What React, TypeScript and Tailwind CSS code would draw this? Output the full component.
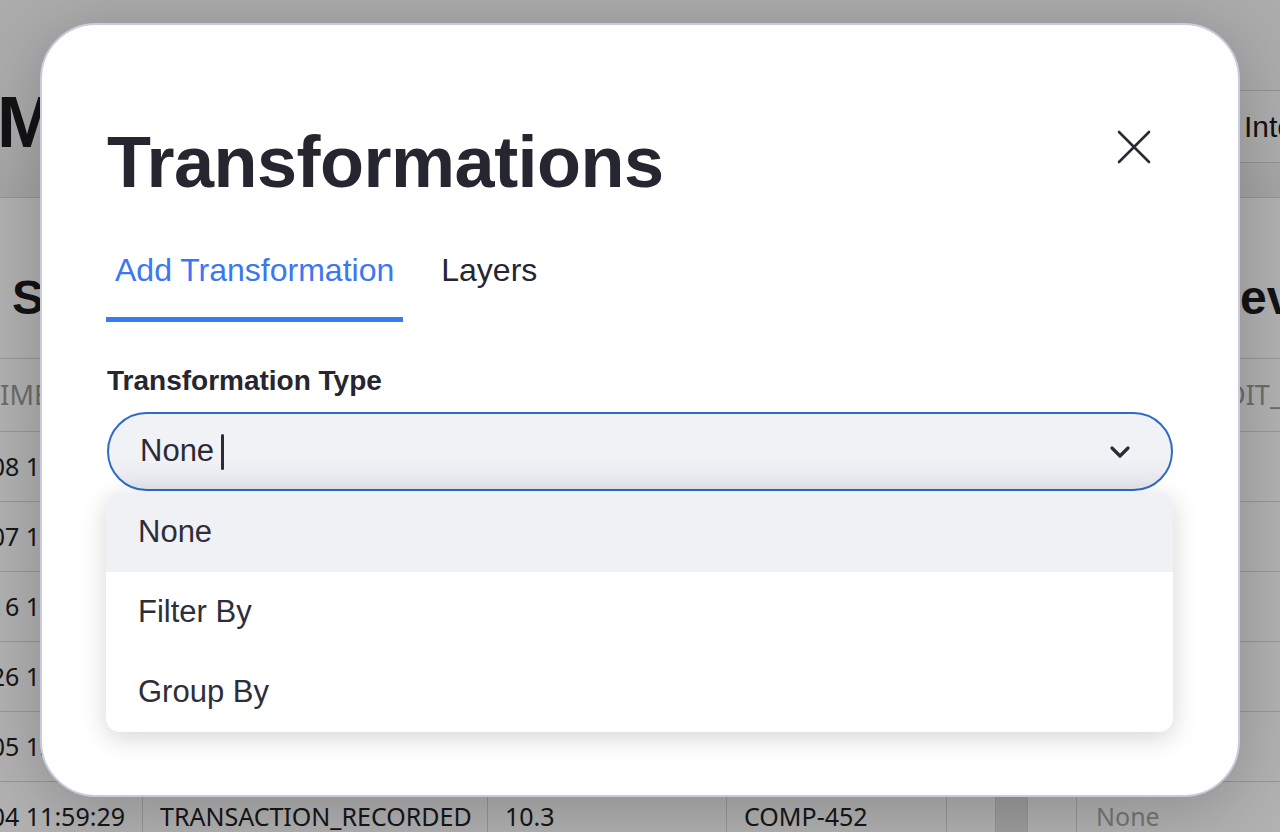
const leftRows = [
  ["2024-03-08 12:22:10", "ORDER_PLACED", "24.9", "COMP-118"],
  ["2024-03-07 10:05:44", "PAYMENT_SETTLED", "88.0", "COMP-207"],
  ["2024-03-16 11:10:11", "ORDER_SHIPPED", "12.5", "COMP-331"],
  ["2024-03-26 19:17:53", "REFUND_ISSUED", "3.75", "COMP-089"],
  ["2024-03-05 13:30:21", "ACCOUNT_UPDATED", "0.0", "COMP-140"],
  ["2024-03-04 11:59:29", "TRANSACTION_RECORDED", "10.3", "COMP-452"],
];

const options = ["None", "Filter By", "Group By"];

function Chevron() {
  return (
    <svg width="22" height="14" viewBox="0 0 22 14" fill="none">
      <polyline
        points="3,3 11,11 19,3"
        stroke="#2a2b35"
        strokeWidth="3.2"
        strokeLinecap="round"
        strokeLinejoin="round"
      />
    </svg>
  );
}

function CloseIcon() {
  return (
    <svg width="36" height="36" viewBox="0 0 36 36" fill="none">
      <path d="M3 3 L33 33 M33 3 L3 33" stroke="#2a2b35" strokeWidth="2.6" strokeLinecap="round" />
    </svg>
  );
}

export default function App() {
  return (
    <div className="relative w-[1280px] h-[832px] overflow-hidden bg-white font-['Liberation_Sans',Arial,sans-serif] text-[#1c1c20]">
      {/* page behind the dialog */}
      <header className="h-[198px] flex justify-between items-start pt-[86px] bg-linear-to-b from-[#f6f6f6] from-70% to-[#ececec] border-b border-[#d6d6d6]">
        <h1 className="ml-[-3px] text-[72px] font-bold leading-none tracking-[-1px]">My Workspace</h1>
        <div className="mt-[4px] h-[73px] w-[51px] border-y border-l border-[#d2d2d2] bg-[#fafafa] pl-[14px] flex items-center text-[30px] overflow-hidden whitespace-nowrap">
          Integrations
        </div>
      </header>

      <div className="flex">
        <section className="w-[995px] shrink-0">
          <h2 className="pl-3 pt-[76px] mb-[36px] text-[48px] font-bold leading-none">Source Events</h2>
          <div className="border-t border-[#d8d8d8] font-['Noto_Sans',sans-serif] text-[25px]">
            <div className="h-[73px] border-b border-[#d8d8d8] grid grid-cols-[143px_345px_239px_220px_48px] items-center text-[#9c9c9c] text-[27px]">
              <div className="flex justify-end pr-[8px] overflow-hidden whitespace-nowrap">TIMESTAMP</div>
              <div className="pl-[17px]">EVENT_TYPE</div>
              <div className="pl-[17px]">AMOUNT</div>
              <div className="pl-[17px]">COMPANY</div>
              <div />
            </div>
            {leftRows.map((r, i) => (
              <div
                key={i}
                className="h-[70px] border-b border-[#d8d8d8] grid grid-cols-[143px_345px_239px_220px_48px] items-stretch text-[#222226]"
              >
                <div className="flex items-center justify-end pr-[17px] overflow-hidden whitespace-nowrap border-r border-[#d8d8d8]">
                  {r[0]}
                </div>
                <div className="flex items-center pl-[17px] border-r border-[#d8d8d8] whitespace-nowrap">{r[1]}</div>
                <div className="flex items-center pl-[17px] border-r border-[#d8d8d8]">{r[2]}</div>
                <div className="flex items-center pl-[17px] border-r border-[#d8d8d8]">{r[3]}</div>
                <div />
              </div>
            ))}
          </div>
        </section>

        <div className="w-[33px] shrink-0 bg-[#e2e2e2] border-x border-[#d8d8d8]" />

        <section className="flex-1 min-w-0">
          <h2 className="pl-[44px] pt-[76px] mb-[36px] text-[48px] font-bold leading-none whitespace-nowrap">Data Preview</h2>
          <div className="border-t border-[#d8d8d8] font-['Noto_Sans',sans-serif] text-[25px]">
            <div className="h-[73px] border-b border-[#d8d8d8] grid grid-cols-[49px_1fr] items-center text-[#9c9c9c] text-[27px]">
              <div />
              <div className="pl-[19px] whitespace-nowrap overflow-hidden">CASH_CREDIT_ID</div>
            </div>
            {leftRows.map((_, i) => (
              <div key={i} className="h-[70px] border-b border-[#d8d8d8] grid grid-cols-[49px_1fr]">
                <div className="border-r border-[#d8d8d8]" />
                <div className="flex items-center pl-[19px] text-[#a9a9a9]">None</div>
              </div>
            ))}
          </div>
        </section>
      </div>

      {/* backdrop */}
      <div className="absolute inset-0 bg-black/30" />

      {/* dialog */}
      <div className="absolute left-[40px] top-[23px] w-[1200px] h-[774px] rounded-[56px] border-2 border-[#c8cbd9] bg-white px-[65px] shadow-[0_12px_70px_rgba(0,0,0,0.22)]">
        <div className="flex justify-between items-start pt-[101px]">
          <h1 className="text-[72px] font-bold leading-none tracking-[-0.5px] text-[#25262f]">Transformations</h1>
          <button className="mt-[3px] mr-[21px]">
            <CloseIcon />
          </button>
        </div>

        <div className="mt-[52px] flex text-[32px] leading-[40px]">
          <div className="ml-[-1px] px-[9px] pb-[27px] border-b-[5px] border-[#3b7bf2] text-[#3b78f0]">Add Transformation</div>
          <div className="ml-[29px] px-[9px] pb-[27px] border-b-[5px] border-transparent text-[#25262f]">Layers</div>
        </div>

        <div className="mt-[43px] text-[28px] leading-[32px] font-bold text-[#25262f]">Transformation Type</div>

        <div className="relative mt-[15px]">
          <div className="h-[79px] rounded-full border-2 border-[#2f6bc6] bg-linear-to-b from-[#f1f2f6] from-60% to-[#e5e6eb] pl-[31px] pr-[40px] flex items-center justify-between">
            <div className="flex items-center text-[31px] text-[#2a2b35]">
              None
              <span className="ml-[7px] w-[3px] h-[36px] rounded-sm bg-[#2a2b35]" />
            </div>
            <Chevron />
          </div>

          <div className="absolute top-[80px] left-[-1px] right-0 rounded-[14px] bg-white overflow-hidden shadow-[0_6px_26px_rgba(0,0,0,0.17)]">
            {options.map((o, i) => (
              <div
                key={o}
                className={`h-[80px] flex items-center pl-[32px] text-[31px] text-[#2d2e3a] ${i === 0 ? "bg-[#f0f1f5]" : ""}`}
              >
                {o}
              </div>
            ))}
          </div>
        </div>
      </div>
    </div>
  );
}
